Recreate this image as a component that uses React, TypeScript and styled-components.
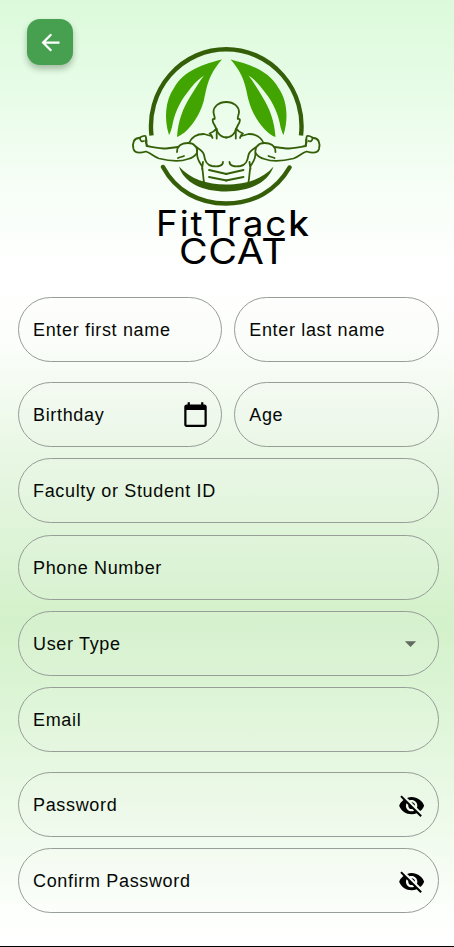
import React from "react";
import styled, { createGlobalStyle } from "styled-components";
import {
  MdArrowBack,
  MdArrowDropDown,
  MdCalendarToday,
  MdVisibilityOff,
} from "react-icons/md";

const GlobalStyle = createGlobalStyle`
  * { box-sizing: border-box; }
  body { margin: 0; }
`;

const Screen = styled.main`
  width: 454px;
  height: 947px;
  overflow: hidden;
  display: flex;
  flex-direction: column;
  border-bottom: 1px solid #000;
  font-family: "Liberation Sans", Arial, sans-serif;
  color: #050805;
  background: linear-gradient(
    180deg,
    #dcfadb 0,
    #e7fce7 90px,
    #f7fef7 190px,
    #ffffff 275px,
    #fcfefb 340px,
    #e9f7e5 450px,
    #d3f1ca 622px,
    #dff6d9 720px,
    #eefaea 820px,
    #fdfffc 915px,
    #ffffff 946px
  );
`;

const Header = styled.header`
  position: relative;
  display: flex;
  flex-direction: column;
  align-items: center;
  height: 296.6px;
  flex: none;
  padding-top: 40px;
`;

const BackButton = styled.button`
  position: absolute;
  left: 27px;
  top: 19px;
  width: 46px;
  height: 46px;
  display: grid;
  place-items: center;
  padding: 0 0 0 1px;
  border: 0;
  border-radius: 13px;
  color: #fff;
  background: #46a04f;
  box-shadow: 0 4px 6px rgba(30, 60, 30, 0.32);
`;

const Emblem = styled.svg`
  display: block;
  width: 200px;
  height: 170px;
  margin-right: 4px;
  flex: none;
`;

const BrandName = styled.h1`
  display: flex;
  flex-direction: column;
  align-items: center;
  margin: -1.5px 0 0 12px;
  font: 400 35px/28.3px Inter, sans-serif;
  color: #000;
`;

const BrandLine = styled.span<{ $spacing: number; $stretch: number }>`
  letter-spacing: ${(p) => p.$spacing}px;
  transform: scaleX(${(p) => p.$stretch});
  white-space: nowrap;
`;

const HeavyLetter = styled.span`
  font-weight: 500;
`;

const Form = styled.form`
  display: flex;
  flex-direction: column;
  padding: 0 15.5px 0 18px;
`;

const FieldRow = styled.div<{ $gap: number }>`
  display: grid;
  grid-auto-flow: column;
  grid-auto-columns: 1fr;
  column-gap: 12px;
  margin-bottom: ${(p) => p.$gap}px;
`;

const Field = styled.label`
  display: flex;
  align-items: center;
  justify-content: space-between;
  height: 65px;
  padding: 0 12.2px 0 14px;
  border: 1px solid #979d97;
  border-radius: 32.5px;
  background: rgba(246, 246, 246, 0.1);
  font-size: 18px;
  letter-spacing: 0.66px;
  white-space: nowrap;
`;

const FieldText = styled.span`
  padding-top: 2px;
`;

const FieldIcon = styled.span<{ $muted?: boolean }>`
  display: flex;
  padding-top: ${(p) => (p.$muted ? 0 : 1)}px;
  padding-right: ${(p) => (p.$muted ? 1 : 0)}px;
  color: ${(p) => (p.$muted ? "#626a61" : "#000")};
`;

function HalfBody() {
  return (
    <>
      <g fill="#42a400">
        <path d="M222 59.500C204 64 184 70 174 88C165 101 164 119 169 135C170 134 171 130 172 127C174 115 179 103 187 93C192 86 197 80 204 75.500C199 82 195 89 190 97C183 108 178 121 177 137C186 134 199 119 204 100C207 87 208 75 222 59.500Z" />
      </g>
      <g fill="none" stroke="#345f08" strokeWidth="1.8" strokeLinecap="round" strokeLinejoin="round">
        <path d="M226.500 102C218 102 213.500 107 213.500 112C213.500 115 215.500 117 214.500 119C212 118 212 121 214.500 125C216 128 217 130 217.500 132C220 136 222 137.500 226.500 137.500" />
        <path d="M216.700 129V138.500M216 129C214 132 211 133 209.500 133.500C211 134 212 136 212.500 138" />
        <path d="M189 143C192 136 198 134 204 134L211 136" />
        <path d="M147 145C144 142 147.500 139 145.500 136C143 135 141 137 139 138C134 138 132 143 133.500 149C135 154 141 153 146 151.500C151 153 154 157 159 158.500C169 161 180 162 188 159C192 158 195 156 197 153" />
        <path d="M140 138C140 141 142 142 144 141M146.500 140V146C153 147 160 148.500 166 148.500L178 147" />
        <path d="M177 152C177 145 183 143 188 143C194 143 198 147 197 153M194 145C198 149 203 150 204 155C205 162 207 165 212 166C218 167 223 166 223 162M178 158C180 157 182 157 184 156M197 153C197 160 200 163 202 166C203 171 203 177 204 182M203 162L202 169" />
        <path d="M209 170L226.500 174M209 177L226.500 180.500" />
      </g>
    </>
  );
}

function FitnessEmblem() {
  return (
    <Emblem viewBox="125 40 200 170" role="img" aria-label="Fitness emblem">
      <g fill="none" stroke="#345f08" strokeWidth="4.4">
        <path d="M151.500 135.500A75.300 77 0 1 1 301 135.500" />
        <path d="M163 167C176 191 199 203.500 226 203.500S276 191 289.500 167.500" strokeLinecap="round" />
      </g>
      <path fill="#345f08" d="M179 166.500C190 179 207 184.500 226 184.500S262 180 273.500 166.500C268 183 249 191.500 226 191.500S184 183 179 166.500Z" />
      <HalfBody />
      <g transform="matrix(-1 0 0 1 452.500 0)">
        <HalfBody />
      </g>
    </Emblem>
  );
}

interface TextFieldProps {
  label: string;
  icon?: React.ReactNode;
  muted?: boolean;
}

function TextField({ label, icon, muted }: TextFieldProps) {
  return (
    <Field>
      <FieldText>{label}</FieldText>
      {icon && <FieldIcon $muted={muted}>{icon}</FieldIcon>}
    </Field>
  );
}

export default function App() {
  return (
    <>
      <GlobalStyle />
      <Screen>
        <Header>
          <BackButton aria-label="Back">
            <MdArrowBack size={27} />
          </BackButton>
          <FitnessEmblem />
          <BrandName>
            <BrandLine $spacing={1.8} $stretch={1.055}>
              FitTrac<HeavyLetter>k</HeavyLetter>
            </BrandLine>
            <BrandLine $spacing={0.5} $stretch={1.125}>CCAT</BrandLine>
          </BrandName>
        </Header>
        <Form>
          <FieldRow $gap={20.4}>
            <TextField label="Enter first name" />
            <TextField label="Enter last name" />
          </FieldRow>
          <FieldRow $gap={11.3}>
            <TextField label="Birthday" icon={<MdCalendarToday size={27} />} />
            <TextField label="Age" />
          </FieldRow>
          <FieldRow $gap={11.3}>
            <TextField label="Faculty or Student ID" />
          </FieldRow>
          <FieldRow $gap={11.3}>
            <TextField label="Phone Number" />
          </FieldRow>
          <FieldRow $gap={11.3}>
            <TextField label="User Type" icon={<MdArrowDropDown size={27} />} muted />
          </FieldRow>
          <FieldRow $gap={20}>
            <TextField label="Email" />
          </FieldRow>
          <FieldRow $gap={11.3}>
            <TextField label="Password" icon={<MdVisibilityOff size={27.3} />} />
          </FieldRow>
          <FieldRow $gap={0}>
            <TextField label="Confirm Password" icon={<MdVisibilityOff size={27.3} />} />
          </FieldRow>
        </Form>
      </Screen>
    </>
  );
}
